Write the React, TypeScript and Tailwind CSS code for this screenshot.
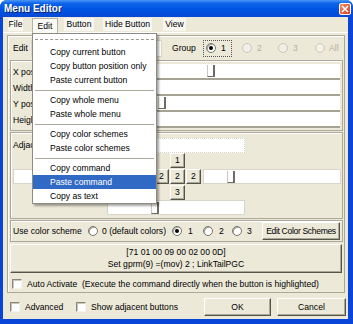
import React from 'react';

const Radio = ({ on, off }: { on?: boolean; off?: boolean }) => (
  <span
    className={
      'relative inline-block h-[10px] w-[10px] shrink-0 rounded-full border ' +
      (off ? 'border-[#cbc8b8] bg-[#f1efe6]' : 'border-[#77766d] bg-white shadow-[inset_1px_1px_0_#a8a69b]')
    }
  >
    {on && <span className="absolute left-[2px] top-[2px] h-[4px] w-[4px] rounded-full bg-black" />}
  </span>
);

const Check = () => (
  <span className="inline-block h-[10px] w-[10px] shrink-0 border border-t-[#8a887d] border-l-[#8a887d] border-r-[#f4f3ee] border-b-[#f4f3ee] bg-white shadow-[inset_1px_1px_0_#c7c5b8]" />
);

const Btn = ({ className, children }: { className: string; children: React.ReactNode }) => (
  <div
    className={
      'flex items-center justify-center border border-t-white border-l-white border-r-[#555449] border-b-[#555449] bg-[#ece9d8] shadow-[inset_-1px_-1px_0_#aca899] ' +
      className
    }
  >
    {children}
  </div>
);

// trackbar thumb
const Thumb = ({ className }: { className: string }) => (
  <div
    className={
      'absolute top-[1px] h-[12px] w-[8px] border-l border-b border-r-2 border-l-[#c9c7ba] border-b-[#6f6d63] border-r-[#6f6d63] bg-white ' +
      className
    }
  />
);

const SliderRow = ({ label, children }: { label: string; children?: React.ReactNode }) => (
  <div className="flex h-[16px] items-stretch">
    <span className="flex w-[34px] items-center pl-[2px]">{label}</span>
    <div className="relative flex-1 border-b-2 border-b-[#a5a394] bg-white">{children}</div>
  </div>
);

const CloseBtn = () => (
  <div className="flex h-[12px] w-[12px] items-center justify-center rounded-[2px] border border-white bg-[linear-gradient(135deg,#f08a6a,#d9431c)]">
    <svg width="8" height="8" viewBox="0 0 8 8">
      <path d="M1 1 L7 7 M7 1 L1 7" stroke="white" strokeWidth="1.6" />
    </svg>
  </div>
);

const Item = ({ children, hot }: { children: string; hot?: boolean }) => (
  <div className={'flex h-[14px] items-center pl-[17px] ' + (hot ? 'bg-[#316ac5] text-white' : '')}>{children}</div>
);

const Sep = () => (
  <div className="flex h-[6px] items-center px-[2px]">
    <div className="h-[1px] w-full bg-[#aca899]" />
  </div>
);

const EditMenu = () => (
  <div className="absolute left-[32px] top-[33px] w-[125px] border border-[#8e8c80] bg-white shadow-[2px_2px_2px_rgba(0,0,0,0.35)]">
    <div className="flex h-[11px] items-center px-[2px]">
      <div className="w-full border-t border-dashed border-[#9a988c]" />
    </div>
    <Item>Copy current button</Item>
    <Item>Copy button position only</Item>
    <Item>Paste current button</Item>
    <Sep />
    <Item>Copy whole menu</Item>
    <Item>Paste whole menu</Item>
    <Sep />
    <Item>Copy color schemes</Item>
    <Item>Paste color schemes</Item>
    <Sep />
    <Item>Copy command</Item>
    <Item hot>Paste command</Item>
    <Item>Copy as text</Item>
  </div>
);

export default function App() {
  return (
    <div className="relative flex h-[324px] w-[353px] flex-col overflow-hidden rounded-t-[7px] bg-[#0845d8] font-['Liberation_Sans',Arial,sans-serif] text-[8.6px] leading-none text-black">
      {/* title bar */}
      <div className="flex h-[17px] shrink-0 items-center justify-between bg-[linear-gradient(180deg,#4a96f7_0%,#0e63ea_20%,#0054e3_55%,#0848d6_100%)] pl-[4px] pr-[2px]">
        <span className="text-[10px] font-bold text-white [text-shadow:1px_1px_0_#0a246a]">Menu Editor</span>
        <CloseBtn />
      </div>

      <div className="mb-[5px] ml-[3px] mr-[5px] flex flex-1 flex-col bg-[#ece9d8]">
        {/* menu bar */}
        <div className="flex h-[16px] shrink-0 items-start border-b border-b-white pt-[1px]">
          <span className="ml-[5px] flex h-[13px] w-[15px] items-center justify-center bg-[#f7f6f1]">File</span>
          <span className="ml-[9px] flex h-[15px] w-[26px] items-center justify-center border border-b-0 border-[#b4b2a6] bg-[#fbfaf6]">Edit</span>
          <span className="ml-[6px] flex h-[13px] w-[30px] items-center justify-center bg-[#f7f6f1]">Button</span>
          <span className="ml-[9px] flex h-[13px] w-[49px] items-center justify-center bg-[#f7f6f1]">Hide Button</span>
          <span className="ml-[11px] flex h-[13px] w-[23px] items-center justify-center bg-[#f7f6f1]">View</span>
        </div>

        {/* main panel */}
        <div className="ml-[4px] mt-[2px] flex h-[258px] w-[338px] flex-col border border-[#aca899] shadow-[inset_1px_1px_0_white]">
          {/* edit / group row */}
          <div className="mt-[1px] flex h-[22px] items-center">
            <span className="w-[23px] pl-[5px]">Edit</span>
            <div className="h-[17px] w-[131px] border border-[#d8d6ca] bg-white" />
            <span className="ml-[10px] w-[31px]">Group</span>
            <div className="flex h-[17px] w-[29px] items-center gap-[5px] border border-dotted border-[#555] pl-[2px]">
              <Radio on />
              <span>1</span>
            </div>
            <div className="ml-[10px] flex w-[36px] items-center gap-[5px] text-[#b5b2a3]">
              <Radio off />
              <span>2</span>
            </div>
            <div className="flex w-[37px] items-center gap-[5px] text-[#b5b2a3]">
              <Radio off />
              <span>3</span>
            </div>
            <div className="flex items-center gap-[4px] text-[#b5b2a3]">
              <Radio off />
              <span>All</span>
            </div>
          </div>

          {/* position sliders */}
          <div className="ml-[2px] mt-[1px] flex h-[71px] w-[333px] flex-col border border-[#aca899] pr-[2px] pt-[3px] shadow-[inset_1px_1px_0_white]">
            <SliderRow label="X pos">
              <Thumb className="left-[162px]" />
            </SliderRow>
            <SliderRow label="Width" />
            <SliderRow label="Y pos">
              <Thumb className="left-[113px]" />
            </SliderRow>
            <SliderRow label="Height" />
          </div>

          {/* adjacent buttons */}
          <div className="ml-[2px] mt-[1px] flex h-[87px] w-[333px] flex-col border border-[#aca899] shadow-[inset_1px_1px_0_white]">
            <div className="mt-[5px] flex h-[15px] items-center">
              <span className="w-[96px] pl-[2px]">Adjacent</span>
              <div className="h-[15px] w-[138px] border border-dotted border-[#d8d6ca] bg-white" />
            </div>
            <div className="flex h-[47px] items-center">
              <div className="ml-[2px] h-[15px] w-[139px] border border-[#d8d6ca] bg-white" />
              <div className="ml-[2px] grid grid-cols-[15px_15px_15px] grid-rows-[16px_16px_16px] gap-x-[1px]">
                <span />
                <Btn className="h-[15px]">1</Btn>
                <span />
                <Btn className="h-[15px]">2</Btn>
                <Btn className="h-[15px]">2</Btn>
                <Btn className="h-[15px]">2</Btn>
                <span />
                <Btn className="h-[15px]">3</Btn>
                <span />
              </div>
              <div className="relative ml-[2px] h-[15px] w-[138px] border border-[#d8d6ca] bg-white">
                <Thumb className="left-[23px] top-[0px]" />
              </div>
            </div>
            <div className="ml-[96px] h-[15px] w-[138px] border border-[#d8d6ca] bg-white">
              <div className="relative h-full">
                <Thumb className="left-[43px] top-[0px]" />
              </div>
            </div>
          </div>

          {/* color scheme */}
          <div className="ml-[2px] mt-[1px] flex h-[22px] w-[333px] items-center border border-[#aca899] shadow-[inset_1px_1px_0_white]">
            <span className="w-[77px] pl-[2px]">Use color scheme</span>
            <Radio />
            <span className="ml-[4px] w-[70px]">0 (default colors)</span>
            <Radio on />
            <span className="ml-[6px] w-[15px]">1</span>
            <Radio />
            <span className="ml-[6px] w-[13px]">2</span>
            <Radio />
            <span className="ml-[5px] w-[15px]">3</span>
            <Btn className="h-[18px] w-[78px] tracking-[-0.35px]">Edit Color Schemes</Btn>
          </div>

          {/* command */}
          <Btn className="ml-[2px] mt-[2px] h-[29px] w-[332px] flex-col gap-[3px]">
            <span>[71 01 00 09 00 02 00 0D]</span>
            <span>Set gprm(9) =(mov) 2 ; LinkTailPGC</span>
          </Btn>

          {/* auto activate */}
          <div className="mt-[6px] flex items-center gap-[5px] pl-[4px]">
            <Check />
            <span>Auto Activate&nbsp; (Execute the command directly when the button is highlighted)</span>
          </div>
        </div>

        {/* bottom row */}
        <div className="mt-[5px] flex h-[18px] items-center pl-[7px]">
          <Check />
          <span className="ml-[5px] w-[51px]">Advanced</span>
          <Check />
          <span className="ml-[5px] w-[113px]">Show adjacent buttons</span>
          <Btn className="h-[18px] w-[67px]">OK</Btn>
          <Btn className="ml-[6px] h-[18px] w-[69px]">Cancel</Btn>
        </div>
      </div>

      <EditMenu />
    </div>
  );
}
